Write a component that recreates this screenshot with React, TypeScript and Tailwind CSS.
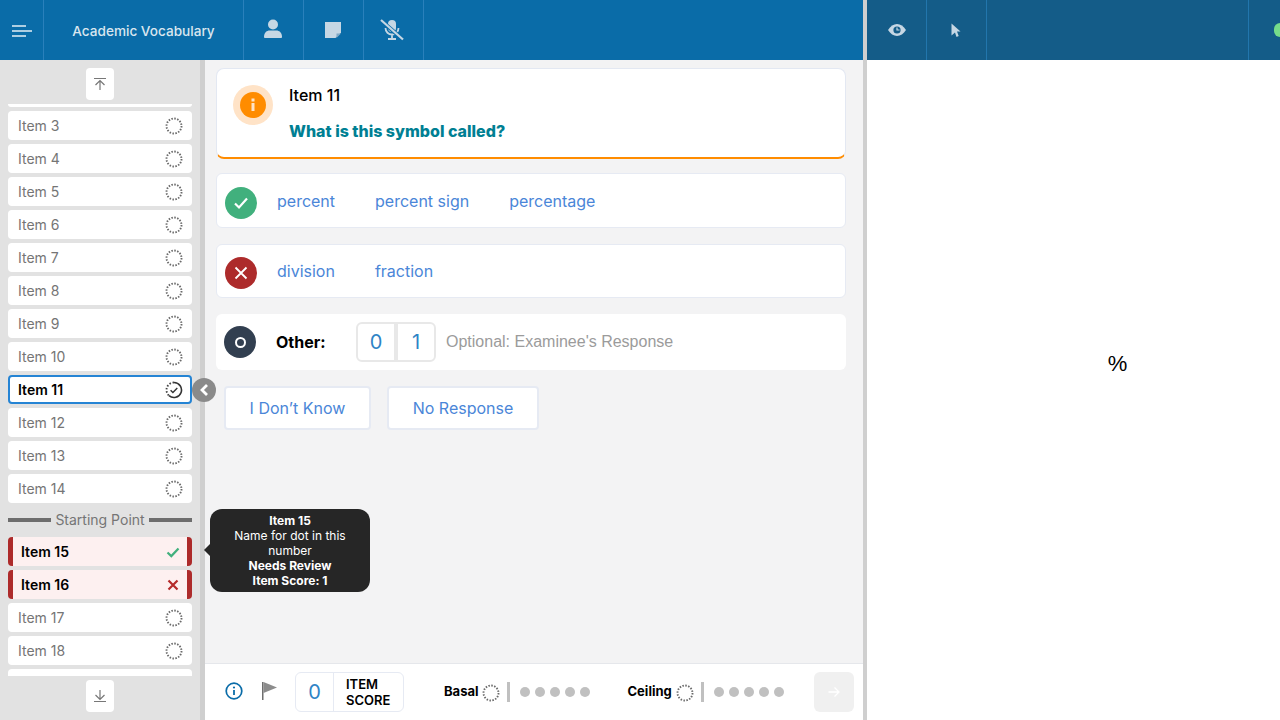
import type { FC } from 'react';

// dotted status ring used in the item list and the basal / ceiling counters
const Ring: FC<{ check?: boolean }> = ({ check }) => (
  <svg width="18" height="18" viewBox="0 0 18 18" fill="none">
    {check ? (
      <>
        <path d="M9 1.500A7.500 7.500 0 1 1 4 14.600" stroke="#333" strokeWidth="1.600" />
        <path d="M9 1.500A7.500 7.500 0 0 0 4 14.600" stroke="#444" strokeWidth="1.900" strokeDasharray="1.500 1.700" />
        <path d="M5.600 9.200l2.300 2.300 4.400-4.600" stroke="#333" strokeWidth="1.400" />
      </>
    ) : (
      <circle cx="9" cy="9" r="7.500" stroke="#6a6a6a" strokeWidth="1.900" strokeDasharray="1.500 1.450" />
    )}
  </svg>
);

const Item: FC<{ n: number }> = ({ n }) => (
  <div className="h-[29px] shrink-0 bg-white rounded flex items-center justify-between pl-[10px] pr-[9px] text-sm text-[#757575]">
    <span>Item {n}</span>
    <Ring />
  </div>
);

const ReviewItem: FC<{ n: number; ok: boolean }> = ({ n, ok }) => (
  <div className="h-[29px] shrink-0 bg-[#fdf0f0] rounded flex items-center justify-between border-x-[5px] border-[#ad2b2b] pl-2 pr-[7px] text-sm font-semibold text-black">
    <span>Item {n}</span>
    {ok ? (
      <svg width="14" height="14" viewBox="0 0 14 14" fill="none" stroke="#41b07d" strokeWidth="2.200">
        <path d="M1.500 7.500l3.800 3.600 7.200-7.600" />
      </svg>
    ) : (
      <svg width="14" height="14" viewBox="0 0 14 14" fill="none" stroke="#b52a2a" strokeWidth="2.200">
        <path d="M2.500 2.500l9 9M11.500 2.500l-9 9" />
      </svg>
    )}
  </div>
);

const HeaderCell: FC<{ children: React.ReactNode; w: string }> = ({ children, w }) => (
  <div className={`${w} h-full flex items-center justify-center border-r border-[#2a80bb]`}>{children}</div>
);

const Dots: FC = () => (
  <div className="flex gap-[5px] ml-[10px]">
    {[0, 1, 2, 3, 4].map((i) => (
      <span key={i} className="w-[10px] h-[10px] rounded-full bg-[#c0c0c0]" />
    ))}
  </div>
);

export default function App() {
  return (
    <div className="w-[1280px] h-[720px] overflow-hidden flex bg-white font-['Inter',sans-serif]">
      {/* left side */}
      <div className="w-[863px] h-full flex flex-col">
        <header className="h-[60px] shrink-0 bg-[#0a6ca8] flex text-[#d4e2ec]">
          <HeaderCell w="w-[44px]">
            <svg width="22" height="14" viewBox="0 0 22 14" fill="none" stroke="#e4eef5" strokeWidth="1.700" className="mt-[1px]">
              <path d="M1 2h14M1 7h20M1 12h14" />
            </svg>
          </HeaderCell>
          <HeaderCell w="w-[200px]">
            <span className="text-[13.600px] font-medium text-[#d9e6ef] mt-[2px]">Academic Vocabulary</span>
          </HeaderCell>
          <HeaderCell w="w-[60px]">
            <svg width="20" height="20" viewBox="0 0 20 20" fill="#c6d7e4" className="-mt-[2px] -ml-[2px]">
              <circle cx="10" cy="5.500" r="5" />
              <path d="M1 18c0-4.500 3-6.500 5.500-6.500h7c2.500 0 5.500 2 5.500 6.500 0 .5-.5 1-1 1H2c-.5 0-1-.5-1-1z" />
            </svg>
          </HeaderCell>
          <HeaderCell w="w-[60px]">
            <svg width="18" height="18" viewBox="0 0 18 18" fill="#c6d7e4" className="-ml-[2px]">
              <path d="M1 1h16v10.500l-5.500 5.500h-10.500z" />
              <path d="M12.500 17l4.500-4.500h-4.500z" fill="#7fa8c6" />
            </svg>
          </HeaderCell>
          <HeaderCell w="w-[60px]">
            <svg width="26" height="22" viewBox="0 0 26 22" fill="none" className="-ml-[3px]">
              <rect x="9" y="1" width="8" height="12" rx="4" fill="#c6d7e4" />
              <path d="M6.500 9c0 4 3 6.500 6.500 6.500s6.500-2.500 6.500-6.500M13 15.500V19M9 20h8" stroke="#c6d7e4" strokeWidth="1.800" />
              <path d="M2 1.500l22 19" stroke="#0a6ca8" strokeWidth="4" />
              <path d="M2 1l22 19.500" stroke="#c6d7e4" strokeWidth="2.200" />
            </svg>
          </HeaderCell>
        </header>

        <div className="flex-1 flex min-h-0 relative">
          {/* item list */}
          <aside className="w-[205px] shrink-0 bg-[#e2e2e2] border-r-[5px] border-[#cfcfcf] flex flex-col items-stretch pt-2 px-2">
            <button type="button" className="w-7 h-8 self-center shrink-0 bg-white rounded flex items-center justify-center text-[#777]">
              <svg width="14" height="14" viewBox="0 0 14 14" fill="none" stroke="#777" strokeWidth="1.200">
                <path d="M1 1.500h12M7 13V3.500M2.500 8L7 3.500 11.500 8" />
              </svg>
            </button>
            <div className="h-[572px] mt-1 overflow-hidden flex flex-col gap-1 shrink-0">
              <div className="h-[3px] shrink-0 bg-white rounded-b" />
              <Item n={3} />
              <Item n={4} />
              <Item n={5} />
              <Item n={6} />
              <Item n={7} />
              <Item n={8} />
              <Item n={9} />
              <Item n={10} />
              <div className="h-[29px] shrink-0 bg-white rounded border-2 border-[#2584d4] flex items-center justify-between pl-2 pr-[7px] text-sm font-semibold text-black">
                <span>Item 11</span>
                <Ring check />
              </div>
              <Item n={12} />
              <Item n={13} />
              <Item n={14} />
              <div className="h-[26px] shrink-0 flex items-center gap-1 text-sm text-[#757575]">
                <span className="flex-1 h-1 bg-[#6d6d6d]" />
                <span>Starting Point</span>
                <span className="flex-1 h-1 bg-[#6d6d6d]" />
              </div>
              <ReviewItem n={15} ok />
              <ReviewItem n={16} ok={false} />
              <Item n={17} />
              <Item n={18} />
              <div className="h-[29px] shrink-0 bg-white rounded" />
            </div>
            <button type="button" className="w-7 h-8 self-center shrink-0 mt-1 bg-white rounded flex items-center justify-center">
              <svg width="14" height="14" viewBox="0 0 14 14" fill="none" stroke="#777" strokeWidth="1.200">
                <path d="M1 12.500h12M7 1v9.500M2.500 6L7 10.500 11.500 6" />
              </svg>
            </button>
          </aside>

          {/* collapse handle */}
          <div className="absolute left-[192px] top-[318px] w-6 h-6 rounded-full bg-[#8a8a8a] flex items-center justify-center">
            <svg width="12" height="14" viewBox="0 0 12 14" fill="none" stroke="#fff" strokeWidth="2.800">
              <path d="M9 2L4 7l5 5" />
            </svg>
          </div>

          {/* tooltip */}
          <div className="absolute left-[210px] top-[449px] w-40 h-[83px] rounded-xl bg-[#262626] text-white text-xs leading-[15px] text-center flex flex-col justify-center px-2">
            <span className="font-bold">Item 15</span>
            <span>Name for dot in this number</span>
            <span className="font-bold">Needs Review</span>
            <span className="font-bold">Item Score: 1</span>
          </div>
          <span className="absolute left-[204px] top-[484px] w-0 h-0 border-y-[6px] border-y-transparent border-r-[6px] border-r-[#262626]" />

          {/* item panel */}
          <main className="flex-1 min-w-0 flex flex-col bg-[#f3f3f4]">
            <div className="flex-1 pt-2 pl-[11px] pr-[17px]">
              <div className="h-[91px] bg-white rounded-lg border border-[#e3e8f2] border-b-2 border-b-[#ff8c00] flex pl-4 pt-4">
                <div className="w-10 h-10 rounded-full bg-[#ffe3c7] flex items-center justify-center">
                  <div className="w-[26px] h-[26px] rounded-full bg-[#ff8c00] flex items-center justify-center">
                    <svg width="6" height="14" viewBox="0 0 6 14" fill="#ffe3c7">
                      <rect x="1.500" y="0.500" width="3" height="3" />
                      <rect x="1.500" y="5" width="3" height="8" />
                    </svg>
                  </div>
                </div>
                <div className="ml-4 -mt-[3px]">
                  <div className="text-base font-medium leading-5 mt-[3px] text-black">Item 11</div>
                  <div className="text-base font-extrabold leading-5 mt-4 text-[#007f93]">What is this symbol called?</div>
                </div>
              </div>

              <div className="mt-[14px] h-[55px] bg-white rounded-md border border-[#e6eaf3] flex items-center pl-2 text-base text-[#4a86d8]">
                <div className="w-8 h-8 rounded-full bg-[#41b07d] flex items-center justify-center mt-1">
                  <svg width="16" height="14" viewBox="0 0 16 14" fill="none" stroke="#fff" strokeWidth="2.200">
                    <path d="M2 7.500l4 4 8-9" />
                  </svg>
                </div>
                <div className="flex gap-10 ml-5">
                  <span>percent</span>
                  <span>percent sign</span>
                  <span>percentage</span>
                </div>
              </div>

              <div className="mt-4 h-[54px] bg-white rounded-md border border-[#e6eaf3] flex items-center pl-2 text-base text-[#4a86d8]">
                <div className="w-8 h-8 rounded-full bg-[#ad2b2b] flex items-center justify-center mt-1">
                  <svg width="14" height="14" viewBox="0 0 14 14" fill="none" stroke="#fff" strokeWidth="1.800">
                    <path d="M1.500 1.500l11 11M12.500 1.500l-11 11" />
                  </svg>
                </div>
                <div className="flex gap-10 ml-5">
                  <span>division</span>
                  <span>fraction</span>
                </div>
              </div>

              <div className="mt-4 h-14 bg-white rounded-md flex items-center pl-2">
                <div className="w-8 h-8 rounded-full bg-[#323f50] flex items-center justify-center">
                  <span className="w-[11px] h-[11px] rounded-full border-2 border-white" />
                </div>
                <span className="ml-5 w-20 text-base font-bold text-black">Other:</span>
                <div className="h-10 flex rounded-md border-2 border-[#e8e8e8] text-xl text-[#2f84c6] bg-[#e8e8e8] gap-1">
                  <span className="w-[36px] bg-white rounded-l flex items-center justify-center">0</span>
                  <span className="w-[36px] bg-white rounded-r flex items-center justify-center">1</span>
                </div>
                <span className="ml-[10px] text-base text-[#9b9b9b] font-['Liberation_Sans',sans-serif]">Optional: Examinee's Response</span>
              </div>

              <div className="mt-4 ml-2 flex gap-4 text-base text-[#4a86d8]">
                <button type="button" className="w-[147px] h-[44px] bg-white rounded border-2 border-[#e6eaf3]">I Don’t Know</button>
                <button type="button" className="w-[152px] h-[44px] bg-white rounded border-2 border-[#e6eaf3]">No Response</button>
              </div>
            </div>

            {/* footer */}
            <footer className="h-[57px] shrink-0 bg-white border-t border-[#e5e7eb] flex items-center pl-5 relative">
              <svg width="18" height="18" viewBox="0 0 18 18" fill="none" className="-mt-[2px]">
                <circle cx="9" cy="9" r="7.800" stroke="#0a6ca8" strokeWidth="1.700" />
                <path d="M9 8v5" stroke="#0a6ca8" strokeWidth="1.800" />
                <circle cx="9" cy="5.500" r="1.100" fill="#0a6ca8" />
              </svg>
              <svg width="16" height="20" viewBox="0 0 16 20" className="ml-[18px] -mt-[2px]">
                <path d="M1 1h1.500v18H1z" fill="#6e6e6e" />
                <path d="M2.500 1L16 6.500 2.500 12z" fill="#8c8c8c" />
              </svg>
              <div className="ml-[18px] w-[109px] h-10 rounded-md border border-[#e6eaf3] flex">
                <span className="w-[38px] border-r border-[#e6eaf3] flex items-center justify-center text-xl text-[#2f84c6]">0</span>
                <span className="pl-3 text-[13px] font-semibold leading-4 self-center text-black">
                  ITEM
                  <br />
                  SCORE
                </span>
              </div>
              <span className="ml-10 text-[13px] font-bold text-black">Basal</span>
              <span className="ml-[3px] mt-[2px]">
                <Ring />
              </span>
              <span className="ml-[7px] w-[3px] h-5 bg-[#c0c0c0]" />
              <Dots />
              <span className="ml-[38px] text-[13px] font-bold text-black">Ceiling</span>
              <span className="ml-1 mt-[2px]">
                <Ring />
              </span>
              <span className="ml-[7px] w-[3px] h-5 bg-[#c0c0c0]" />
              <Dots />
              <button type="button" className="ml-[30px] w-10 h-10 rounded-md bg-[#f0f0f0] flex items-center justify-center">
                <svg width="12" height="12" viewBox="0 0 12 12" fill="none" stroke="#fff" strokeWidth="1.300">
                  <path d="M0.500 6h10.500M6.500 1.500L11 6l-4.500 4.500" />
                </svg>
              </button>
            </footer>
          </main>
        </div>
      </div>

      {/* divider */}
      <div className="w-1 h-full shrink-0 bg-[#cfcfcf]" />

      {/* right side */}
      <div className="flex-1 min-w-0 h-full flex flex-col">
        <header className="h-[60px] shrink-0 bg-[#145c88] flex overflow-hidden">
          <div className="w-[60px] flex items-center justify-center border-r border-[#2276ad]">
            <svg width="18" height="12" viewBox="0 0 18 12">
              <path d="M0 6c2.500-3.800 5.500-6 9-6s6.500 2.200 9 6c-2.500 3.800-5.500 6-9 6s-6.500-2.200-9-6z" fill="#c6d7e4" />
              <circle cx="9" cy="6" r="3.600" fill="#145c88" />
              <path d="M9 3.500V6h2.500" stroke="#c6d7e4" strokeWidth="1.200" fill="none" />
            </svg>
          </div>
          <div className="w-[60px] flex items-center justify-center border-r border-[#2276ad]">
            <svg width="10" height="15" viewBox="0 0 10 15" fill="#c6d7e4" className="-ml-[2px]">
              <path d="M0.500 0.500L9.500 8.500H6l1.700 4.500-2.200 1L4 9.500 0.500 12.500z" />
            </svg>
          </div>
          <div className="flex-1 border-r border-[#2276ad]" />
          <div className="w-[31px] flex items-center">
            <span className="ml-[25px] w-3 h-[14px] shrink-0 rounded-full bg-[#76dc8a]" />
          </div>
        </header>
        <div className="flex-1 flex items-center justify-center">
          <span className="relative left-[44px] top-[-27px] text-[22px] text-black font-['Liberation_Sans',sans-serif]">%</span>
        </div>
      </div>
    </div>
  );
}
